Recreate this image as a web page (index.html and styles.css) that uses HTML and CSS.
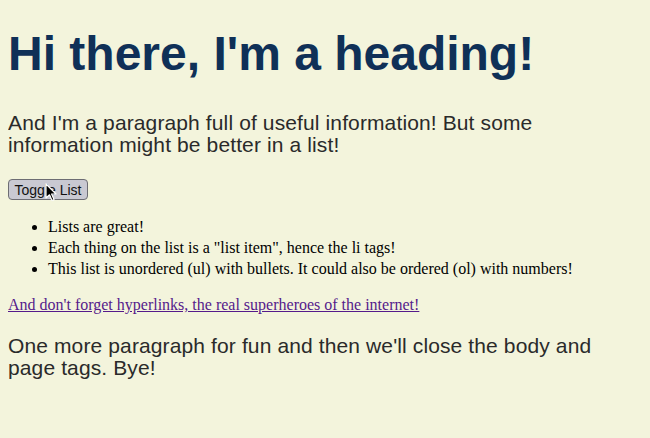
FILE: index.html
```html
<!DOCTYPE html>
<html>
<head>
<meta charset="utf-8">
<link rel="stylesheet" href="styles.css">
</head>
<body>
<h1 class="title">Hi there, I'm a heading!</h1>
<p class="intro">And I'm a paragraph full of useful information! But some information might be better in a list!</p>
<div class="btn-wrap"><button class="toggle">Toggle List</button><svg class="cursor" width="12" height="19" viewBox="0 0 12 19"><path d="M1 1 L1 15 L4.5 11.8 L7 17.5 L9 16.6 L6.6 11 L11 11 Z" fill="#000" stroke="#fff" stroke-width="1.2" stroke-linejoin="round"/></svg></div>
<ul class="items">
<li>Lists are great!</li>
<li>Each thing on the list is a "list item", hence the li tags!</li>
<li>This list is unordered (ul) with bullets. It could also be ordered (ol) with numbers!</li>
</ul>
<a class="link" href="#">And don't forget hyperlinks, the real superheroes of the internet!</a>
<p class="outro">One more paragraph for fun and then we'll close the body and page tags. Bye!</p>
</body>
</html>
```
FILE: styles.css
```css
html, body {
  background: #f3f4dc;
}
body {
  margin: 8px;
  font-family: "Liberation Serif", serif;
  font-size: 16px;
}
.title {
  font-family: "Liberation Sans", Arial, sans-serif;
  font-size: 48px;
  font-weight: bold;
  color: #0f3057;
  margin: 18px 0 0;
  line-height: 55px;
}
.intro, .outro {
  font-family: "Liberation Sans", Arial, sans-serif;
  font-size: 21px;
  letter-spacing: 0.12px;
  line-height: 22px;
  color: #2a2a2a;
}
.intro {
  margin: 31px 0 0;
}
.outro {
  margin: 21px 0 0;
}
.btn-wrap {
  position: relative;
  margin-top: 23px;
  height: 21px;
}
.toggle {
  font-family: "Liberation Sans", Arial, sans-serif;
  font-size: 14px;
  height: 21px;
  width: 80px;
  padding: 0;
  background: #c9c9d2;
  border: 1px solid #6d6d73;
  border-radius: 4px;
  color: #111;
}
.cursor {
  position: absolute;
  left: 37px;
  top: 4px;
}
.items {
  margin: 16px 0 0;
  padding-left: 40px;
}
.items li {
  line-height: 21px;
}
.link {
  display: block;
  margin-top: 17px;
  color: #551a8b;
}
```
